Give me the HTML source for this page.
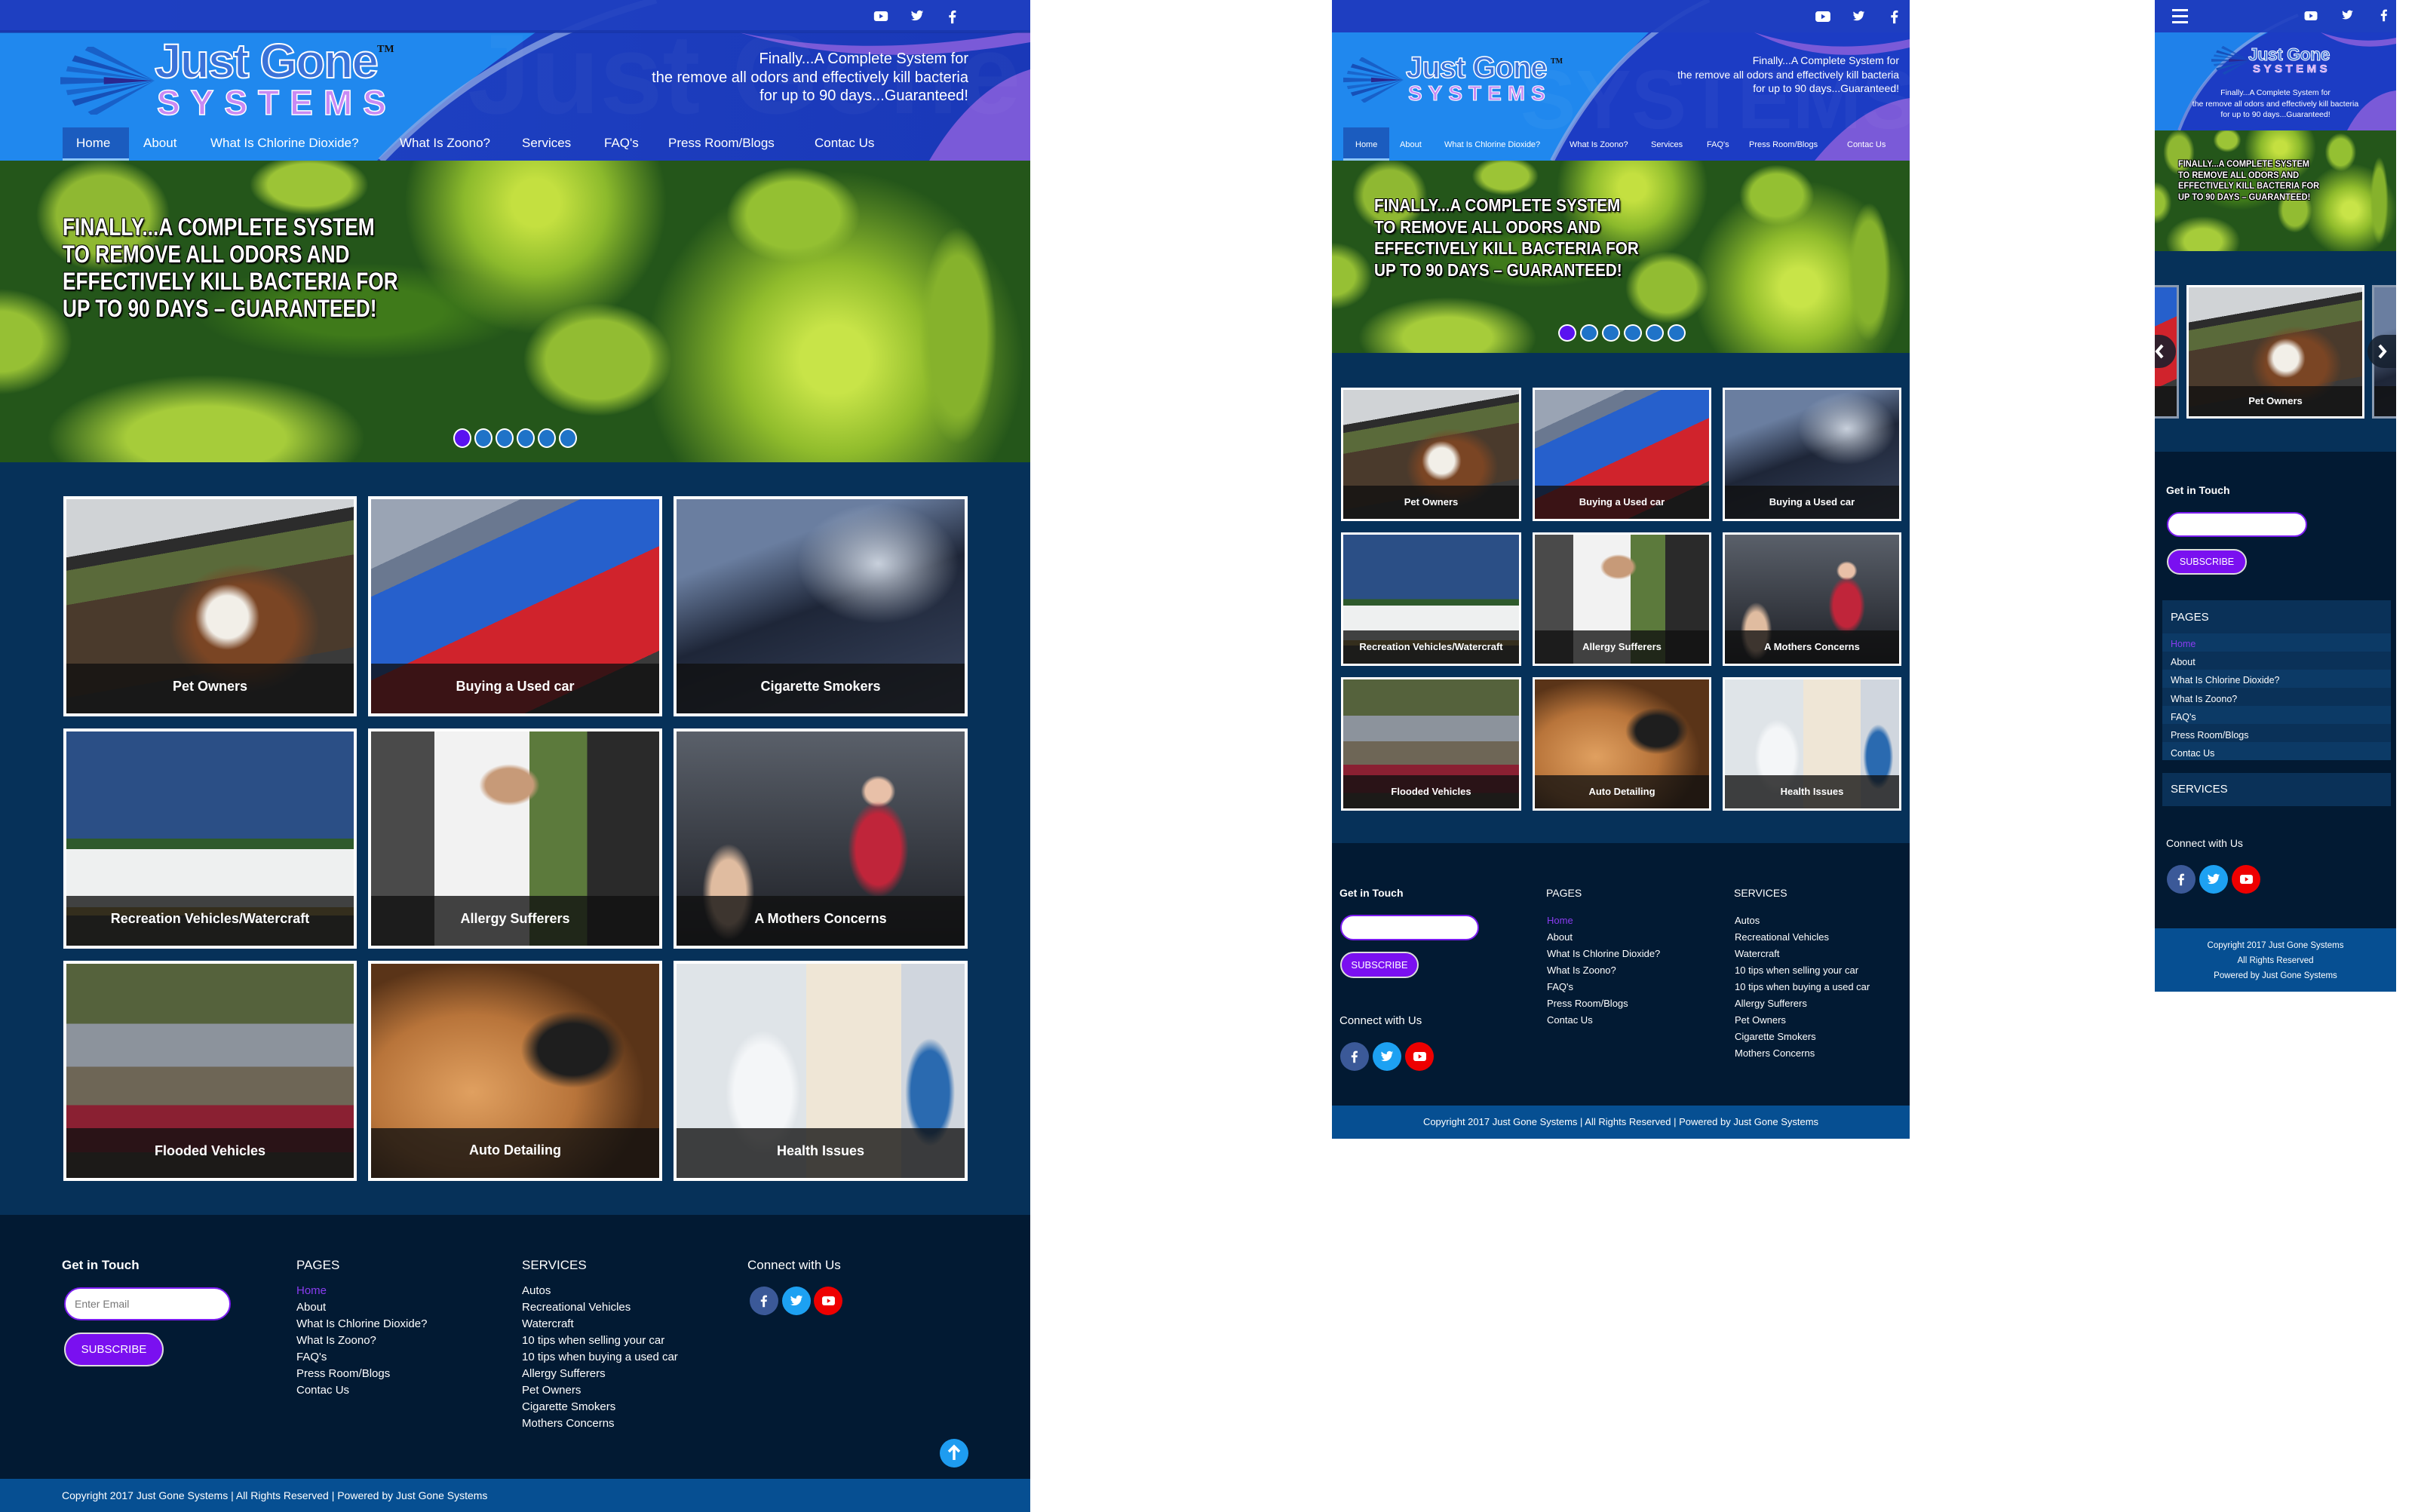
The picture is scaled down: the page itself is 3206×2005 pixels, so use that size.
<!DOCTYPE html>
<html><head><meta charset="utf-8">
<style>
*{margin:0;padding:0;box-sizing:border-box}
html,body{width:3206px;height:2005px;background:#fff;overflow:hidden;font-family:"Liberation Sans",Arial,sans-serif;color:#fff}
.a{position:absolute}
.panel{position:absolute;top:0;overflow:hidden}
.hero{background:
radial-gradient(ellipse 9% 26% at 10% 18%,#8fb832 0 50%,rgba(143,184,50,0) 72%),
radial-gradient(ellipse 8% 14% at 30% 8%,#9cc436 0 50%,rgba(0,0,0,0) 72%),
radial-gradient(circle at 52% 14%,#c4e040 0 4%,#8cba2c 12%,rgba(120,170,30,0) 22%),
radial-gradient(ellipse 9% 22% at 77% 18%,#94c032 0 50%,rgba(0,0,0,0) 72%),
radial-gradient(ellipse 5% 48% at 93% 58%,#86b22c 0 55%,rgba(0,0,0,0) 75%),
radial-gradient(ellipse 10% 26% at 58% 66%,#92bc32 0 50%,rgba(0,0,0,0) 72%),
radial-gradient(circle at 81% 66%,#c8e448 0 4%,#90bc2c 11%,rgba(120,170,30,0) 22%),
radial-gradient(ellipse 22% 30% at 20% 92%,#a6cc3a 0 35%,rgba(120,170,30,0) 70%),
radial-gradient(ellipse 10% 25% at 0% 60%,#96c034 0 40%,rgba(0,0,0,0) 70%),
radial-gradient(ellipse 20% 20% at 35% 50%,#3f7a1a 0 40%,rgba(0,0,0,0) 80%),
#24561a}
.dot{position:absolute;border-radius:50%;background:#1f73c8;border:2px solid #fff}
.dot.on{background:#5a12f0}
.ht{position:absolute;font-weight:bold;text-transform:uppercase;color:#fff;white-space:nowrap;transform-origin:0 0;text-shadow:-1px -1px 0 #000,1px -1px 0 #000,-1px 1px 0 #000,1px 1px 0 #000,2px 2px 2px #000}
.tile{position:absolute;border:4px solid #fff;overflow:hidden}
.tile .img{position:absolute;inset:0}
.cap{position:absolute;left:0;right:0;bottom:0;background:rgba(15,15,15,.78);font-weight:bold;text-align:center;color:#fff}
.pet{background:radial-gradient(ellipse 16% 22% at 56% 55%,#f2efe8 0 45%,rgba(0,0,0,0) 70%),radial-gradient(ellipse 35% 40% at 62% 60%,#7a4524 0 50%,rgba(0,0,0,0) 75%),linear-gradient(170deg,#d0d3d6 0 22%,#2c2c2c 22% 27%,#5a6a3a 27% 40%,#4a3a2c 40% 75%,#3a3a3a 75%)}
.car{background:linear-gradient(155deg,#9aa4b4 0 20%,#6a7890 20% 28%,#2660cc 28% 52%,#d0232c 52% 82%,#3a3a3a 82%)}
.smoke{background:radial-gradient(ellipse 40% 40% at 70% 30%,#c8d0dc,rgba(200,208,220,0) 70%),linear-gradient(160deg,#6a7ea0 0 25%,#1e2638 50%,#3a4660 100%)}
.rv{background:linear-gradient(#2b4f86 0 50%,#2e5a2c 50% 55%,#eef0f0 55% 82%,#b89a50 82% 86%,#4a4a42 86%)}
.allergy{background:radial-gradient(ellipse 15% 14% at 48% 25%,#c79a78 0 55%,rgba(0,0,0,0) 70%),linear-gradient(90deg,#4a4a4a 0 22%,#f2f2f2 22% 55%,#5c7a3c 55% 75%,#2a2a2a 75%)}
.mom{background:radial-gradient(ellipse 14% 30% at 70% 55%,#c0253a 0 55%,rgba(0,0,0,0) 75%),radial-gradient(ellipse 8% 10% at 70% 28%,#e8c0a8 0 55%,rgba(0,0,0,0) 75%),radial-gradient(ellipse 12% 30% at 18% 75%,#e0bca0 0 50%,rgba(0,0,0,0) 75%),linear-gradient(#5a606a,#1c1e24)}
.flood{background:linear-gradient(#55623c 0 28%,#8c939c 28% 48%,#6e6656 48% 66%,#8a2032 66% 88%,#4a4038 88%)}
.auto{background:radial-gradient(ellipse 30% 30% at 70% 40%,#1e1e1e 0 40%,rgba(0,0,0,0) 60%),radial-gradient(ellipse 60% 60% at 35% 60%,#e0a060,#b8743a 60%,#5a3418)}
.health{background:radial-gradient(ellipse 12% 35% at 88% 60%,#2a6ab0 0 55%,rgba(0,0,0,0) 72%),radial-gradient(ellipse 18% 40% at 30% 60%,#f4f6f8 0 55%,rgba(0,0,0,0) 72%),linear-gradient(90deg,#dfe4e8 0 45%,#efe6d6 45% 78%,#d0d6de 78%)}
.social span{position:absolute;border-radius:50%;display:flex;align-items:center;justify-content:center}
.fb{background:#3b5998}.tw{background:#1da1f2}.yt{background:#ee0000}
.inp{position:absolute;background:#fff;border:2px solid #7b1cf0;border-radius:30px;color:#777}
.sub{position:absolute;background:#7a10f0;border:2px solid #ddd;border-radius:30px;color:#fff;display:flex;align-items:center;justify-content:center}
.foot{background:#021a33}
.bot{background:#064f92}
.grid{background:#063159}
.lk div{white-space:nowrap}
</style></head><body>
<svg width="0" height="0" style="position:absolute">
<defs>
<symbol id="ytb" viewBox="0 0 24 17"><rect x="0" y="0" width="24" height="17" rx="4" fill="#fff"/><path d="M9.5 4.5 L16 8.5 L9.5 12.5 Z" fill="#1c3cc0"/></symbol>
<symbol id="ytr" viewBox="0 0 24 17"><rect x="0" y="0" width="24" height="17" rx="4" fill="#fff"/><path d="M9.5 4.5 L16 8.5 L9.5 12.5 Z" fill="#e00"/></symbol>
<symbol id="twb" viewBox="0 0 24 24"><path fill="#fff" d="M23 4.6c-.8.4-1.7.6-2.6.7.9-.6 1.6-1.4 2-2.5-.9.5-1.9.9-2.9 1.1A4.5 4.5 0 0 0 11.8 8 12.8 12.8 0 0 1 2.5 3.3a4.5 4.5 0 0 0 1.4 6c-.7 0-1.4-.2-2-.6 0 2.2 1.6 4 3.6 4.4-.7.2-1.4.2-2 .1.6 1.8 2.2 3.1 4.2 3.1A9 9 0 0 1 1 18.2 12.8 12.8 0 0 0 7.9 20.2c8.3 0 12.8-6.9 12.8-12.8v-.6c.9-.6 1.6-1.4 2.3-2.2z"/></symbol>
<symbol id="fbb" viewBox="0 0 24 24"><path fill="#fff" d="M13.5 23v-9.5h3.2l.5-3.7h-3.7V7.5c0-1.1.3-1.8 1.8-1.8h2V2.4c-.3 0-1.5-.2-2.9-.2-2.9 0-4.8 1.7-4.8 5v2.6H6.4v3.7h3.2V23z"/></symbol>
<symbol id="star" viewBox="0 0 130 90"><g fill="#1650b8"><path d="M130 45 L0 40 L0 50 Z" opacity=".8"/><path d="M130 45 L20 10 L16 18 Z"/><path d="M130 45 L40 -5 L34 3 Z" opacity=".7"/><path d="M130 45 L20 80 L16 72 Z"/><path d="M130 45 L45 95 L38 88 Z" opacity=".7"/><path d="M130 45 L10 25 L8 32 Z" opacity=".6"/><path d="M130 45 L10 65 L8 58 Z" opacity=".6"/></g><path d="M128 45 L60 40 L60 50 Z" fill="#2a2890"/></symbol>
</defs></svg>

<!-- ================= PANEL 1 ================= -->
<div class="panel" style="left:0;width:1366px;height:2005px">
  <svg class="a" style="left:0;top:0" width="1366" height="213" viewBox="0 0 1366 213">
    <defs><linearGradient id="g1" x1="0" x2="1"><stop offset="0" stop-color="#1f44c6"/><stop offset="1" stop-color="#1a38b8"/></linearGradient></defs>
    <rect width="1366" height="213" fill="url(#g1)"/>
    <path d="M0 43 L710 43 Q600 120 500 213 L0 213 Z" fill="#2088ee"/>
    <path d="M870 0 Q650 60 505 213" stroke="#8ea8e4" stroke-width="9" fill="none" opacity=".75"/>
    <path d="M980 43 Q1150 80 1366 40 L1366 56 Q1150 95 980 43 Z" fill="#7a5ad8"/>
    <path d="M1232 213 Q1290 115 1366 92 L1366 213 Z" fill="#7a5ad8"/>
    <rect width="1366" height="43" fill="#1e3fc0" opacity=".92"/>
    <rect y="40" width="1366" height="4" fill="#14309a" opacity=".5"/>
    <text x="620" y="150" font-family="Liberation Sans" font-size="150" font-weight="bold" fill="#ffffff" opacity=".025">Just Gone</text>
  </svg>
  <svg class="a" style="left:1158px;top:15px" width="20" height="13"><use href="#ytb"/></svg>
  <svg class="a" style="left:1206px;top:12px" width="20" height="18"><use href="#twb"/></svg>
  <svg class="a" style="left:1253px;top:12px" width="20" height="20"><use href="#fbb"/></svg>
  <svg class="a" style="left:80px;top:62px" width="125" height="90"><use href="#star"/></svg>
  <div class="a" style="left:205px;top:46px;font-size:64px;font-weight:bold;color:#3a72d8;-webkit-text-stroke:2px #fff;letter-spacing:-2px;line-height:70px">Just Gone</div>
  <div class="a" style="left:500px;top:58px;font-size:14px;font-family:'Liberation Serif',serif;color:#111;font-weight:bold">TM</div>
  <div class="a" style="left:208px;top:112px;font-size:46px;font-weight:bold;color:#c88af4;-webkit-text-stroke:1.5px #fff;letter-spacing:14px;line-height:48px">SYSTEMS</div>
  <div class="a" style="right:82px;top:66px;width:600px;text-align:right;font-size:20px;line-height:24.5px">Finally...A Complete System for<br>the remove all odors and effectively kill bacteria<br>for up to 90 days...Guaranteed!</div>
  <div class="a" style="left:83px;top:169px;width:88px;height:44px;background:#1b5cbf;border-bottom:3px solid #8ec6f8"></div>
  <div class="a" style="top:180px;font-size:17px;line-height:20px;left:0;width:1366px;height:22px">
    <span class="a" style="left:101px">Home</span><span class="a" style="left:190px">About</span><span class="a" style="left:279px">What Is Chlorine Dioxide?</span><span class="a" style="left:530px">What Is Zoono?</span><span class="a" style="left:692px">Services</span><span class="a" style="left:801px">FAQ's</span><span class="a" style="left:886px">Press Room/Blogs</span><span class="a" style="left:1080px">Contac Us</span>
  </div>
  <div class="a hero" style="left:0;top:213px;width:1366px;height:400px"></div>
  <div class="ht" style="left:83px;top:283px;font-size:32px;line-height:36px;transform:scaleX(.82)">Finally...A complete system<br>to remove all odors and<br>effectively kill bacteria for<br>up to 90 days – guaranteed!</div>
  <div class="dot on" style="left:601px;top:568px;width:24px;height:26px"></div>
  <div class="dot" style="left:629px;top:568px;width:24px;height:26px"></div>
  <div class="dot" style="left:657px;top:568px;width:24px;height:26px"></div>
  <div class="dot" style="left:685px;top:568px;width:24px;height:26px"></div>
  <div class="dot" style="left:713px;top:568px;width:24px;height:26px"></div>
  <div class="dot" style="left:741px;top:568px;width:24px;height:26px"></div>
  <div class="a grid" style="left:0;top:613px;width:1366px;height:998px"></div>
  <div class="tile" style="left:84px;top:658px;width:389px;height:292px"><div class="img pet"></div><div class="cap" style="height:66px;font-size:18px;line-height:60px">Pet Owners</div></div>
  <div class="tile" style="left:488px;top:658px;width:390px;height:292px"><div class="img car"></div><div class="cap" style="height:66px;font-size:18px;line-height:60px">Buying a Used car</div></div>
  <div class="tile" style="left:893px;top:658px;width:390px;height:292px"><div class="img smoke"></div><div class="cap" style="height:66px;font-size:18px;line-height:60px">Cigarette Smokers</div></div>
  <div class="tile" style="left:84px;top:966px;width:389px;height:292px"><div class="img rv"></div><div class="cap" style="height:66px;font-size:18px;line-height:60px">Recreation Vehicles/Watercraft</div></div>
  <div class="tile" style="left:488px;top:966px;width:390px;height:292px"><div class="img allergy"></div><div class="cap" style="height:66px;font-size:18px;line-height:60px">Allergy Sufferers</div></div>
  <div class="tile" style="left:893px;top:966px;width:390px;height:292px"><div class="img mom"></div><div class="cap" style="height:66px;font-size:18px;line-height:60px">A Mothers Concerns</div></div>
  <div class="tile" style="left:84px;top:1274px;width:389px;height:292px"><div class="img flood"></div><div class="cap" style="height:66px;font-size:18px;line-height:60px">Flooded Vehicles</div></div>
  <div class="tile" style="left:488px;top:1274px;width:390px;height:292px"><div class="img auto"></div><div class="cap" style="height:66px;font-size:18px;line-height:58px">Auto Detailing</div></div>
  <div class="tile" style="left:893px;top:1274px;width:390px;height:292px"><div class="img health"></div><div class="cap" style="height:66px;font-size:18px;line-height:60px">Health Issues</div></div>
  <div class="a foot" style="left:0;top:1611px;width:1366px;height:350px"></div>
  <div class="a" style="left:82px;top:1668px;font-size:17px;font-weight:bold">Get in Touch</div>
  <div class="a" style="left:393px;top:1668px;font-size:17px">PAGES</div>
  <div class="a" style="left:692px;top:1668px;font-size:17px">SERVICES</div>
  <div class="a" style="left:991px;top:1668px;font-size:17px">Connect with Us</div>
  <div class="inp" style="left:85px;top:1707px;width:221px;height:44px;font-size:14px;line-height:40px;padding-left:12px">Enter Email</div>
  <div class="sub" style="left:85px;top:1767px;width:132px;height:45px;font-size:15px">SUBSCRIBE</div>
  <div class="a lk" style="left:393px;top:1701px;font-size:15px;line-height:22px"><div style="color:#8a3cf0">Home</div><div>About</div><div>What Is Chlorine Dioxide?</div><div>What Is Zoono?</div><div>FAQ's</div><div>Press Room/Blogs</div><div>Contac Us</div></div>
  <div class="a lk" style="left:692px;top:1701px;font-size:15px;line-height:22px"><div>Autos</div><div>Recreational Vehicles</div><div>Watercraft</div><div>10 tips when selling your car</div><div>10 tips when buying a used car</div><div>Allergy Sufferers</div><div>Pet Owners</div><div>Cigarette Smokers</div><div>Mothers Concerns</div></div>
  <div class="social">
    <span class="fb" style="left:994px;top:1706px;width:38px;height:38px"><svg width="18" height="18"><use href="#fbb"/></svg></span>
    <span class="tw" style="left:1037px;top:1706px;width:38px;height:38px"><svg width="18" height="18"><use href="#twb"/></svg></span>
    <span class="yt" style="left:1079px;top:1706px;width:38px;height:38px"><svg width="17" height="12"><use href="#ytr"/></svg></span>
  </div>
  <div class="a" style="left:1246px;top:1908px;width:38px;height:38px;border-radius:50%;background:#1e9cf0"><svg width="38" height="38"><path d="M19 28 V11 M12 17 L19 10 L26 17" stroke="#fff" stroke-width="3.5" fill="none"/></svg></div>
  <div class="a bot" style="left:0;top:1961px;width:1366px;height:44px"></div>
  <div class="a" style="left:82px;top:1975px;font-size:14px;white-space:nowrap">Copyright 2017 Just Gone Systems | All Rights Reserved | Powered by Just Gone Systems</div>
</div>

<!-- ================= PANEL 2 ================= -->
<div class="panel" style="left:1766px;width:766px;height:1510px">
  <svg class="a" style="left:0;top:0" width="766" height="213" viewBox="0 0 766 213">
    <rect width="766" height="213" fill="#1c3cc4"/>
    <path d="M0 43 L420 43 Q340 120 292 213 L0 213 Z" fill="#2088ee"/>
    <path d="M500 0 Q370 60 292 213" stroke="#8ea8e4" stroke-width="6" fill="none" opacity=".75"/>
    <path d="M560 43 Q660 75 766 52 L766 63 Q650 90 560 43 Z" fill="#7a5ad8"/>
    <path d="M640 213 Q700 140 766 130 L766 213 Z" fill="#7a5ad8"/>
    <rect width="766" height="43" fill="#1e3fc0" opacity=".92"/>
    <text x="250" y="170" font-family="Liberation Sans" font-size="110" font-weight="bold" fill="#fff" opacity=".03">SYSTEMS</text>
  </svg>
  <svg class="a" style="left:641px;top:15px" width="20" height="14"><use href="#ytb"/></svg>
  <svg class="a" style="left:689px;top:13px" width="19" height="17"><use href="#twb"/></svg>
  <svg class="a" style="left:736px;top:12px" width="20" height="20"><use href="#fbb"/></svg>
  <svg class="a" style="left:15px;top:76px" width="80" height="60"><use href="#star"/></svg>
  <div class="a" style="left:98px;top:68px;font-size:40px;font-weight:bold;color:#3a72d8;-webkit-text-stroke:1.5px #fff;letter-spacing:-1px;line-height:44px">Just Gone</div>
  <div class="a" style="left:290px;top:76px;font-size:10px;font-family:'Liberation Serif',serif;color:#111;font-weight:bold">TM</div>
  <div class="a" style="left:101px;top:109px;font-size:28px;font-weight:bold;color:#c88af4;-webkit-text-stroke:1px #fff;letter-spacing:8px;line-height:30px">SYSTEMS</div>
  <div class="a" style="right:14px;top:71px;width:480px;text-align:right;font-size:14px;line-height:18.5px">Finally...A Complete System for<br>the remove all odors and effectively kill bacteria<br>for up to 90 days...Guaranteed!</div>
  <div class="a" style="left:15px;top:169px;width:61px;height:44px;background:#1b5cbf;border-bottom:3px solid #8ec6f8"></div>
  <div class="a" style="top:185px;font-size:11px;line-height:14px;left:0;width:766px;height:16px">
    <span class="a" style="left:31px">Home</span><span class="a" style="left:90px">About</span><span class="a" style="left:149px">What Is Chlorine Dioxide?</span><span class="a" style="left:315px">What Is Zoono?</span><span class="a" style="left:423px">Services</span><span class="a" style="left:497px">FAQ's</span><span class="a" style="left:553px">Press Room/Blogs</span><span class="a" style="left:683px">Contac Us</span>
  </div>
  <div class="a hero" style="left:0;top:213px;width:766px;height:255px"></div>
  <div class="ht" style="left:56px;top:258px;font-size:23px;line-height:28.5px;transform:scaleX(.9)">Finally...A complete system<br>to remove all odors and<br>effectively kill bacteria for<br>up to 90 days – guaranteed!</div>
  <div class="dot on" style="left:300px;top:430px;width:24px;height:23px"></div>
  <div class="dot" style="left:329px;top:430px;width:24px;height:23px"></div>
  <div class="dot" style="left:358px;top:430px;width:24px;height:23px"></div>
  <div class="dot" style="left:387px;top:430px;width:24px;height:23px"></div>
  <div class="dot" style="left:416px;top:430px;width:24px;height:23px"></div>
  <div class="dot" style="left:445px;top:430px;width:24px;height:23px"></div>
  <div class="a grid" style="left:0;top:468px;width:766px;height:650px"></div>
  <div class="tile" style="left:12px;top:514px;width:239px;height:177px;border-width:3px"><div class="img pet"></div><div class="cap" style="height:44px;font-size:13px;line-height:44px">Pet Owners</div></div>
  <div class="tile" style="left:266px;top:514px;width:237px;height:177px;border-width:3px"><div class="img car"></div><div class="cap" style="height:44px;font-size:13px;line-height:44px">Buying a Used car</div></div>
  <div class="tile" style="left:518px;top:514px;width:237px;height:177px;border-width:3px"><div class="img smoke"></div><div class="cap" style="height:44px;font-size:13px;line-height:44px">Buying a Used car</div></div>
  <div class="tile" style="left:12px;top:706px;width:239px;height:177px;border-width:3px"><div class="img rv"></div><div class="cap" style="height:44px;font-size:13px;line-height:44px">Recreation Vehicles/Watercraft</div></div>
  <div class="tile" style="left:266px;top:706px;width:237px;height:177px;border-width:3px"><div class="img allergy"></div><div class="cap" style="height:44px;font-size:13px;line-height:44px">Allergy Sufferers</div></div>
  <div class="tile" style="left:518px;top:706px;width:237px;height:177px;border-width:3px"><div class="img mom"></div><div class="cap" style="height:44px;font-size:13px;line-height:44px">A Mothers Concerns</div></div>
  <div class="tile" style="left:12px;top:898px;width:239px;height:177px;border-width:3px"><div class="img flood"></div><div class="cap" style="height:44px;font-size:13px;line-height:44px">Flooded Vehicles</div></div>
  <div class="tile" style="left:266px;top:898px;width:237px;height:177px;border-width:3px"><div class="img auto"></div><div class="cap" style="height:44px;font-size:13px;line-height:44px">Auto Detailing</div></div>
  <div class="tile" style="left:518px;top:898px;width:237px;height:177px;border-width:3px"><div class="img health"></div><div class="cap" style="height:44px;font-size:13px;line-height:44px">Health Issues</div></div>
  <div class="a foot" style="left:0;top:1118px;width:766px;height:348px"></div>
  <div class="a" style="left:10px;top:1176px;font-size:14px;font-weight:bold">Get in Touch</div>
  <div class="a" style="left:284px;top:1176px;font-size:14px">PAGES</div>
  <div class="a" style="left:533px;top:1176px;font-size:14px">SERVICES</div>
  <div class="inp" style="left:11px;top:1213px;width:184px;height:34px"></div>
  <div class="sub" style="left:11px;top:1262px;width:104px;height:35px;font-size:13px">SUBSCRIBE</div>
  <div class="a lk" style="left:285px;top:1210px;font-size:13px;line-height:22px"><div style="color:#8a3cf0">Home</div><div>About</div><div>What Is Chlorine Dioxide?</div><div>What Is Zoono?</div><div>FAQ's</div><div>Press Room/Blogs</div><div>Contac Us</div></div>
  <div class="a lk" style="left:534px;top:1210px;font-size:13px;line-height:22px"><div>Autos</div><div>Recreational Vehicles</div><div>Watercraft</div><div>10 tips when selling your car</div><div>10 tips when buying a used car</div><div>Allergy Sufferers</div><div>Pet Owners</div><div>Cigarette Smokers</div><div>Mothers Concerns</div></div>
  <div class="a" style="left:10px;top:1345px;font-size:15px">Connect with Us</div>
  <div class="social">
    <span class="fb" style="left:11px;top:1382px;width:38px;height:38px"><svg width="18" height="18"><use href="#fbb"/></svg></span>
    <span class="tw" style="left:54px;top:1382px;width:38px;height:38px"><svg width="18" height="18"><use href="#twb"/></svg></span>
    <span class="yt" style="left:97px;top:1382px;width:38px;height:38px"><svg width="17" height="12"><use href="#ytr"/></svg></span>
  </div>
  <div class="a bot" style="left:0;top:1466px;width:766px;height:44px"></div>
  <div class="a" style="left:0;top:1480px;width:766px;text-align:center;font-size:13px;white-space:nowrap">Copyright 2017 Just Gone Systems | All Rights Reserved | Powered by Just Gone Systems</div>
</div>

<!-- ================= PANEL 3 ================= -->
<div class="panel" style="left:2857px;width:320px;height:1315px">
  <svg class="a" style="left:0;top:0" width="320" height="173" viewBox="0 0 320 173">
    <rect width="320" height="173" fill="#1c3cc4"/>
    <path d="M0 43 L150 43 Q60 90 30 173 L0 173 Z" fill="#2088ee" opacity=".9"/>
    <path d="M190 20 Q70 70 32 173" stroke="#8ea8e4" stroke-width="4" fill="none" opacity=".7"/>
    <path d="M220 43 Q270 60 320 50 L320 58 Q260 70 220 43 Z" fill="#7a5ad8"/>
    <path d="M255 173 Q280 125 320 120 L320 173 Z" fill="#7a5ad8"/>
    <rect width="320" height="43" fill="#1e3fc0" opacity=".9"/>
  </svg>
  <div class="a" style="left:23px;top:12px;width:21px;height:3px;background:#fff;box-shadow:0 8px 0 #fff,0 16px 0 #fff"></div>
  <svg class="a" style="left:198px;top:15px" width="18" height="12"><use href="#ytb"/></svg>
  <svg class="a" style="left:247px;top:12px" width="17" height="16"><use href="#twb"/></svg>
  <svg class="a" style="left:295px;top:11px" width="18" height="18"><use href="#fbb"/></svg>
  <svg class="a" style="left:75px;top:60px" width="50" height="40"><use href="#star"/></svg>
  <div class="a" style="left:124px;top:60px;font-size:23px;font-weight:bold;color:#3a72d8;-webkit-text-stroke:1px #fff;letter-spacing:-.5px;line-height:25px">Just Gone</div>
  <div class="a" style="left:130px;top:83px;font-size:15px;font-weight:bold;color:#c88af4;-webkit-text-stroke:.6px #fff;letter-spacing:4.5px;line-height:17px">SYSTEMS</div>
  <div class="a" style="left:0;top:116px;width:320px;text-align:center;font-size:10.5px;line-height:14.5px">Finally...A Complete System for<br>the remove all odors and effectively kill bacteria<br>for up to 90 days...Guaranteed!</div>
  <div class="a hero" style="left:0;top:173px;width:320px;height:160px"></div>
  <div class="ht" style="left:31px;top:210px;font-size:12px;line-height:14.5px;transform:scaleX(.92);text-shadow:-1px -1px 0 #000,1px -1px 0 #000,-1px 1px 0 #000,1px 1px 0 #000">Finally...A complete system<br>to remove all odors and<br>effectively kill bacteria for<br>up to 90 days – guaranteed!</div>
  <div class="a grid" style="left:0;top:333px;width:320px;height:266px"></div>
  <div class="tile" style="left:-200px;top:378px;width:232px;height:177px;border:3px solid #8a9ab0"><div class="img car"></div><div class="cap" style="height:40px"></div></div>
  <div class="tile" style="left:288px;top:378px;width:232px;height:177px;border:3px solid #8a9ab0"><div class="img smoke"></div><div class="cap" style="height:40px"></div></div>
  <div class="tile" style="left:42px;top:378px;width:236px;height:177px;border-width:3px"><div class="img pet"></div><div class="cap" style="height:40px;font-size:13px;line-height:40px">Pet Owners</div></div>
  <div class="a" style="left:-20px;top:444px;width:48px;height:44px;border-radius:22px;background:rgba(20,30,45,.85)"><svg width="48" height="44"><path d="M30 14 L23 22 L30 30" stroke="#fff" stroke-width="4" fill="none"/></svg></div>
  <div class="a" style="left:282px;top:444px;width:60px;height:44px;border-radius:22px;background:rgba(20,30,45,.85)"><svg width="40" height="44"><path d="M16 14 L23 22 L16 30" stroke="#fff" stroke-width="4" fill="none"/></svg></div>
  <div class="a foot" style="left:0;top:599px;width:320px;height:632px"></div>
  <div class="a" style="left:15px;top:642px;font-size:14px;font-weight:bold">Get in Touch</div>
  <div class="inp" style="left:16px;top:679px;width:186px;height:33px"></div>
  <div class="sub" style="left:16px;top:728px;width:106px;height:34px;font-size:12.5px">SUBSCRIBE</div>
  <div class="a" style="left:10px;top:796px;width:303px;height:212px;background:#0a3158"></div>
  <div class="a" style="left:10px;top:840px;width:303px;height:24px;background:#0c3a66"></div>
  <div class="a" style="left:10px;top:888px;width:303px;height:24px;background:#0c3a66"></div>
  <div class="a" style="left:10px;top:936px;width:303px;height:24px;background:#0c3a66"></div>
  <div class="a" style="left:10px;top:984px;width:303px;height:24px;background:#0c3a66"></div>
  <div class="a" style="left:21px;top:810px;font-size:15px">PAGES</div>
  <div class="a lk" style="left:21px;top:842px;font-size:12.5px;line-height:24.2px"><div style="color:#8a3cf0">Home</div><div>About</div><div>What Is Chlorine Dioxide?</div><div>What Is Zoono?</div><div>FAQ's</div><div>Press Room/Blogs</div><div>Contac Us</div></div>
  <div class="a" style="left:10px;top:1025px;width:303px;height:44px;background:#0a3158"></div>
  <div class="a" style="left:21px;top:1038px;font-size:15px">SERVICES</div>
  <div class="a" style="left:15px;top:1110px;font-size:14px">Connect with Us</div>
  <div class="social">
    <span class="fb" style="left:16px;top:1147px;width:38px;height:38px"><svg width="18" height="18"><use href="#fbb"/></svg></span>
    <span class="tw" style="left:59px;top:1147px;width:38px;height:38px"><svg width="18" height="18"><use href="#twb"/></svg></span>
    <span class="yt" style="left:102px;top:1147px;width:38px;height:38px"><svg width="17" height="12"><use href="#ytr"/></svg></span>
  </div>
  <div class="a bot" style="left:0;top:1231px;width:320px;height:84px"></div>
  <div class="a" style="left:0;top:1244px;width:320px;text-align:center;font-size:11.5px;line-height:20px">Copyright 2017 Just Gone Systems<br>All Rights Reserved<br>Powered by Just Gone Systems</div>
</div>
</body></html>
